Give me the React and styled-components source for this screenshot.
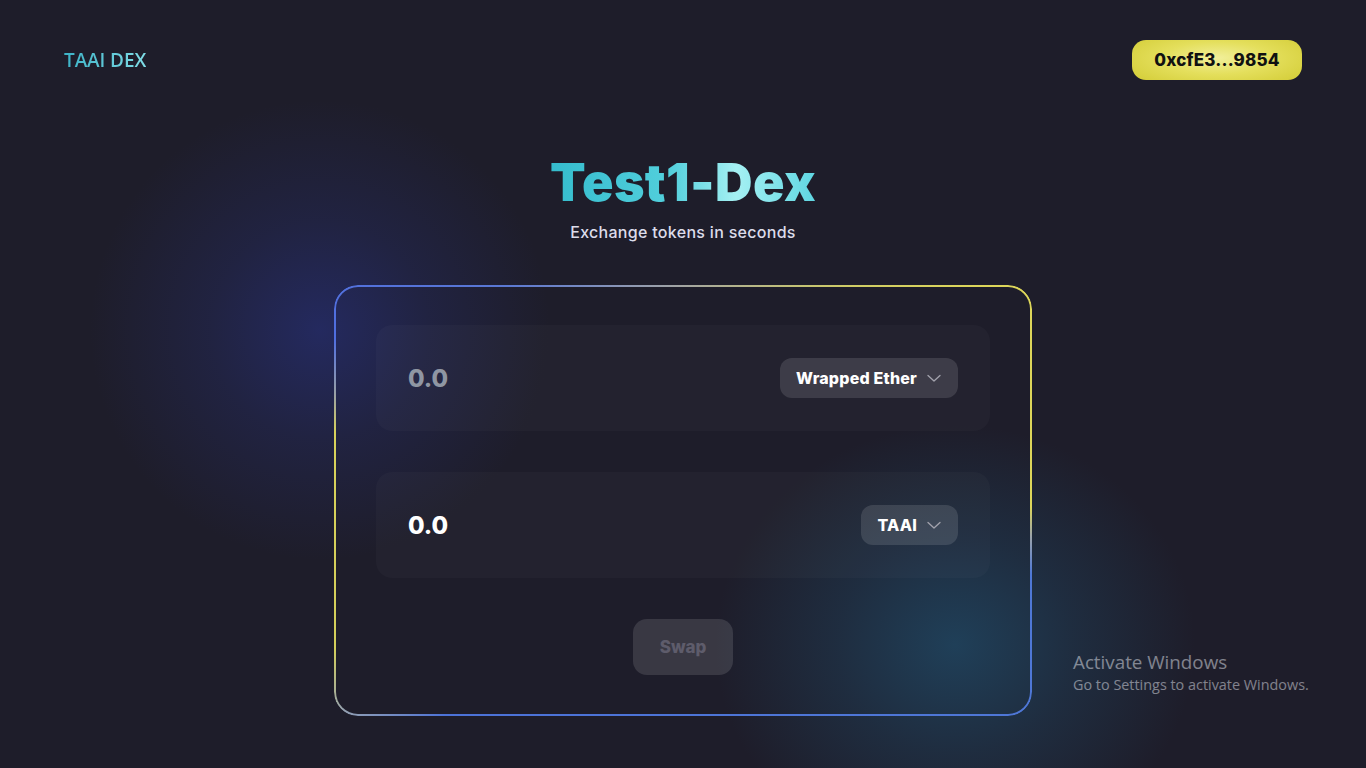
import React from "react";
import styled, { createGlobalStyle } from "styled-components";

const GlobalStyle = createGlobalStyle`
  html, body { margin: 0; padding: 0; }
  body {
    background: #1e1d2a;
    font-family: Inter, "Noto Sans", sans-serif;
    color: #fff;
  }
  * { box-sizing: border-box; }
`;

const Page = styled.div`
  position: relative;
  min-height: 100vh;
  overflow: hidden;
  background:
    radial-gradient(circle at 320px 330px, rgba(40, 50, 130, 0.6) 0px, rgba(40, 50, 125, 0.28) 110px, rgba(40, 50, 125, 0) 230px),
    radial-gradient(ellipse 240px 220px at 955px 645px, rgba(32, 72, 100, 0.8) 0%, rgba(32, 70, 98, 0.38) 50%, rgba(32, 70, 98, 0) 100%),
    #1e1d2a;
`;

const Header = styled.header`
  display: flex;
  justify-content: space-between;
  align-items: center;
  padding: 40px 64px 0;
`;

const Brand = styled.div`
  font-family: "Open Sans", sans-serif;
  font-weight: 600;
  font-size: 19px;
  letter-spacing: -0.1px;
  background: linear-gradient(90deg, #3cb2c6, #7fdce6);
  -webkit-background-clip: text;
  background-clip: text;
  color: transparent;
`;

const Wallet = styled.button`
  width: 170px;
  height: 40px;
  border: none;
  border-radius: 14px;
  background: radial-gradient(ellipse 70% 90% at 50% 45%, #f1ef9a 0%, #e4df5c 45%, #d1ca32 100%);
  color: #111;
  font-family: Inter, sans-serif;
  font-weight: 800;
  font-size: 17px;
  letter-spacing: 0.2px;
  cursor: pointer;
`;

const Main = styled.main`
  display: flex;
  flex-direction: column;
  align-items: center;
`;

const Title = styled.h1`
  margin: 72px 0 0;
  font-family: Inter, sans-serif;
  font-weight: 900;
  font-size: 52px;
  line-height: 62px;
  letter-spacing: 0.4px;
  background: linear-gradient(90deg, #35bccd 0%, #52cfdc 45%, #a5f0f3 70%, #5fd6e2 100%);
  -webkit-background-clip: text;
  background-clip: text;
  color: transparent;
`;

const Subtitle = styled.p`
  margin: 6px 0 0;
  font-size: 16px;
  line-height: 24px;
  font-weight: 500;
  letter-spacing: 0.3px;
  color: #dcdcea;
`;

const Card = styled.section`
  position: relative;
  margin-top: 41px;
  width: 698px;
  padding: 40px 42px 41px;
  border-radius: 24px;
  display: flex;
  flex-direction: column;
  align-items: center;
  gap: 41px;

  &::before {
    content: "";
    position: absolute;
    inset: 0;
    border-radius: 24px;
    padding: 2px;
    background: conic-gradient(
      from 0deg at 50% 50%,
      #a3a5a2 0deg,
      #cfcc66 38deg,
      #ddd65a 55deg,
      #ddd65a 91deg,
      #9aa3ac 96deg,
      #4f78d6 102deg,
      #4c72d8 228deg,
      #93a0b2 238deg,
      #d3ce5a 247deg,
      #d8d25a 281deg,
      #99a0a6 287deg,
      #4f6ee0 295deg,
      #5a78d4 320deg,
      #8c97b4 345deg,
      #a3a5a2 360deg
    );
    -webkit-mask: linear-gradient(#000 0 0) content-box, linear-gradient(#000 0 0);
    -webkit-mask-composite: xor;
    mask-composite: exclude;
    pointer-events: none;
  }
`;

const Rows = styled.div`
  width: 100%;
  display: flex;
  flex-direction: column;
  gap: 41px;
`;

const Row = styled.div`
  height: 106px;
  border-radius: 16px;
  background: rgba(255, 255, 255, 0.025);
  display: flex;
  align-items: center;
  justify-content: space-between;
  padding: 0 32px;
`;

const Amount = styled.input`
  width: 260px;
  background: transparent;
  border: none;
  outline: none;
  padding: 0;
  font-family: Inter, sans-serif;
  font-weight: 800;
  font-size: 24px;
  color: #fff;
  caret-color: #fff;
  &::placeholder { color: #8f96a3; }
`;

const TokenSelect = styled.button`
  height: 40px;
  display: flex;
  align-items: center;
  gap: 9px;
  padding: 0 16px;
  border: none;
  border-radius: 12px;
  background: rgba(255, 255, 255, 0.12);
  color: #fff;
  font-family: Inter, sans-serif;
  font-weight: 800;
  font-size: 16px;
  letter-spacing: 0.2px;
  cursor: pointer;
`;

const SwapButton = styled.button`
  width: 100px;
  height: 56px;
  border: none;
  border-radius: 14px;
  background: rgba(255, 255, 255, 0.12);
  color: #5e5c6b;
  font-family: Inter, sans-serif;
  font-weight: 800;
  font-size: 17px;
`;

const Watermark = styled.div`
  position: absolute;
  left: 1073px;
  top: 650px;
  font-family: "Open Sans", "Noto Sans", sans-serif;
  color: rgba(230, 232, 240, 0.5);
`;

const WmTitle = styled.div`
  font-size: 18.8px;
  line-height: 24px;
`;

const WmSub = styled.div`
  font-size: 14.4px;
  line-height: 22px;
`;

const Chevron = () => (
  <svg width="16" height="16" viewBox="0 0 16 16" fill="none">
    <path d="M2 5.5 L8 11 L14 5.5" stroke="#a3a3ad" strokeWidth="1.3" strokeLinecap="round" strokeLinejoin="round" />
  </svg>
);

export default function App() {
  return (
    <Page>
      <GlobalStyle />
      <Header>
        <Brand>TAAI DEX</Brand>
        <Wallet>0xcfE3...9854</Wallet>
      </Header>
      <Main>
        <Title>Test1-Dex</Title>
        <Subtitle>Exchange tokens in seconds</Subtitle>
        <Card>
          <Rows>
            <Row>
              <Amount placeholder="0.0" autoFocus />
              <TokenSelect>
                Wrapped Ether
                <Chevron />
              </TokenSelect>
            </Row>
            <Row>
              <Amount value="0.0" readOnly />
              <TokenSelect>
                TAAI
                <Chevron />
              </TokenSelect>
            </Row>
          </Rows>
          <SwapButton disabled>Swap</SwapButton>
        </Card>
      </Main>
      <Watermark>
        <WmTitle>Activate Windows</WmTitle>
        <WmSub>Go to Settings to activate Windows.</WmSub>
      </Watermark>
    </Page>
  );
}
